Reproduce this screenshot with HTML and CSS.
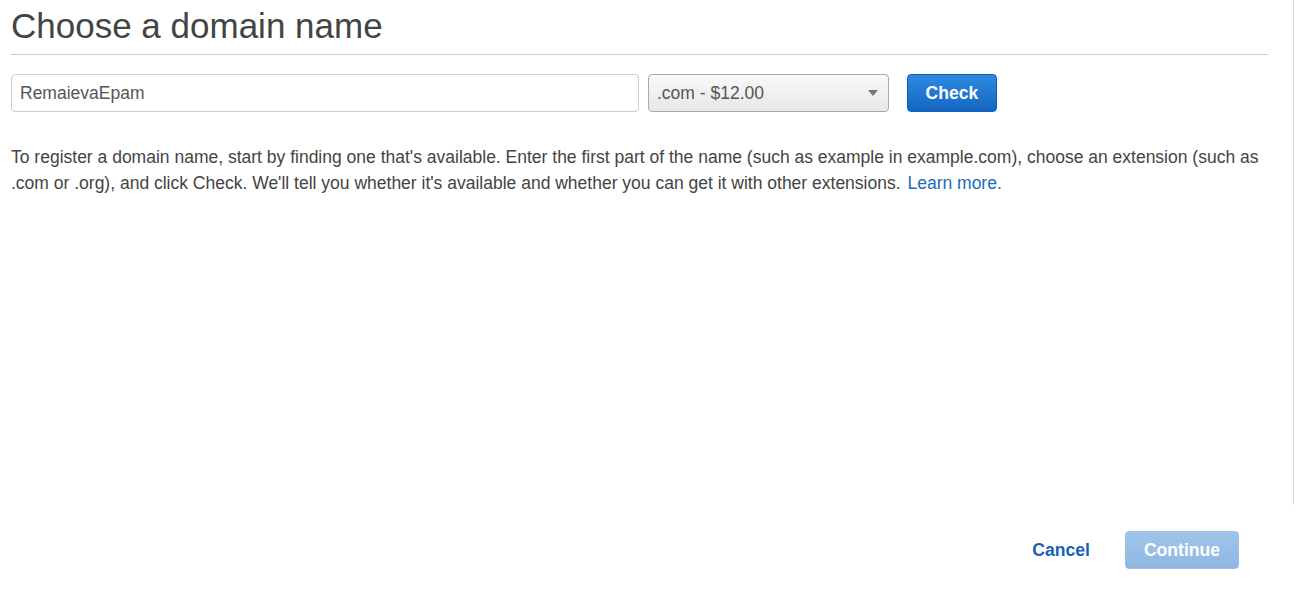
FILE: index.html
```html
<!DOCTYPE html>
<html>
<head>
<meta charset="utf-8">
<link rel="stylesheet" href="styles.css">
</head>
<body>
<div class="page">
  <div class="content">
    <h1 class="title">Choose a domain name</h1>
    <div class="search-row">
      <div class="name-input">RemaievaEpam</div>
      <div class="tld-select">
        <span>.com - $12.00</span>
        <svg class="caret" width="10" height="6" viewBox="0 0 10 6"><path d="M0 0 L10 0 L5 6 Z" fill="#777"/></svg>
      </div>
      <div class="btn btn-primary">Check</div>
    </div>
    <p class="help">To register a domain name, start by finding one that's available. Enter the first part of the name (such as example in example.com), choose an extension (such as .com or .org), and click Check. We'll tell you whether it's available and whether you can get it with other extensions. <a class="link" href="#">Learn more.</a></p>
  </div>
</div>
<div class="footer">
  <a class="cancel" href="#">Cancel</a>
  <div class="btn btn-disabled">Continue</div>
</div>
</body>
</html>
```
FILE: styles.css
```css
html, body {
  margin: 0;
  padding: 0;
  background: #fff;
  font-family: "Liberation Sans", Arial, sans-serif;
  color: #444;
}
.page {
  width: 1294px;
  height: 505px;
  box-sizing: border-box;
  border-right: 1px solid #d8d8d8;
  padding: 0 25px 0 11px;
}
.content {
  display: flex;
  flex-direction: column;
}
.title {
  margin: 0;
  padding: 6px 0 8px;
  font-size: 35px;
  font-weight: normal;
  line-height: 40px;
  color: #444;
  border-bottom: 1px solid #ccc;
}
.search-row {
  display: flex;
  align-items: center;
  margin-top: 19px;
  height: 38px;
}
.name-input {
  width: 628px;
  height: 38px;
  box-sizing: border-box;
  border: 1px solid #ccc;
  border-radius: 4px;
  padding: 0 8px;
  font-size: 17.5px;
  line-height: 36px;
  color: #555;
}
.tld-select {
  margin-left: 9px;
  width: 241px;
  height: 38px;
  box-sizing: border-box;
  border: 1px solid #aaa;
  border-radius: 4px;
  background: linear-gradient(#fafafa, #f0f0f0 50%, #e8e8e8);
  padding: 0 10px 0 8px;
  display: flex;
  align-items: center;
  justify-content: space-between;
  font-size: 17.5px;
  color: #555;
}
.btn {
  height: 38px;
  box-sizing: border-box;
  border-radius: 4px;
  display: flex;
  align-items: center;
  justify-content: center;
  font-weight: bold;
  font-size: 17.6px;
  color: #fff;
}
.btn-primary {
  margin-left: 18px;
  width: 90px;
  background: linear-gradient(#2e8ae0, #1466c2);
  border: 1px solid #1460b5;
}
.help {
  margin: 32px 0 0;
  font-size: 17.5px;
  line-height: 26px;
  color: #444;
}
.link {
  color: #1a6bc1;
  text-decoration: none;
  margin-left: 2px;
}
.footer {
  display: flex;
  justify-content: flex-end;
  align-items: center;
  width: 1268px;
  padding-top: 26px;
  padding-right: 29px;
  box-sizing: border-box;
}
.cancel {
  color: #1660b8;
  font-weight: bold;
  font-size: 17.6px;
  text-decoration: none;
  margin-right: 35px;
}
.btn-disabled {
  width: 114px;
  background: linear-gradient(#9fc6ec, #8db6e2);
  border: 1px solid #9bbfe5;
}
```
